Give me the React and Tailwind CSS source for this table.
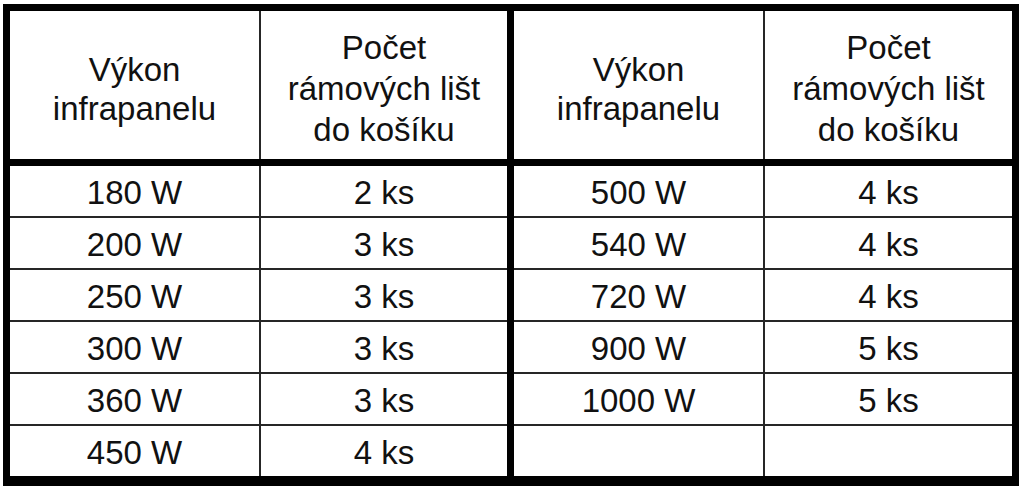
const left = [
  ['180 W', '2 ks'],
  ['200 W', '3 ks'],
  ['250 W', '3 ks'],
  ['300 W', '3 ks'],
  ['360 W', '3 ks'],
  ['450 W', '4 ks'],
];

const right = [
  ['500 W', '4 ks'],
  ['540 W', '4 ks'],
  ['720 W', '4 ks'],
  ['900 W', '5 ks'],
  ['1000 W', '5 ks'],
  ['', ''],
];

const Half = ({ rows, className = '', firstWidth, secondWidth }) => (
  <div className={`flex flex-col ${className}`}>
    <div className="flex h-[155px] border-b-[7px] border-black">
      <div className={`${firstWidth} flex items-center justify-center border-r-2 border-[#262626] pt-[8px] text-center leading-[39px]`}>
        <span>
          Výkon
          <br />
          infrapanelu
        </span>
      </div>
      <div className={`${secondWidth} flex items-center justify-center pt-[7px] text-center leading-[41px]`}>
        <span>
          Počet
          <br />
          rámových lišt
          <br />
          do košíku
        </span>
      </div>
    </div>
    {rows.map(([power, count], i) => (
      <div
        key={i}
        className={`flex ${i === 0 ? 'h-[50px]' : 'h-[52px] border-t-2 border-[#262626]'}`}
      >
        <div className={`${firstWidth} flex items-center justify-center border-r-2 border-[#262626] pt-[3px]`}>
          {power}
        </div>
        <div className={`${secondWidth} flex items-center justify-center pt-[3px]`}>{count}</div>
      </div>
    ))}
  </div>
);

export default function App() {
  return (
    <div className="h-[486px] w-[1028px] overflow-hidden bg-white pl-[3px] pt-[4px] font-['Liberation_Sans',Arial,sans-serif] text-[33px] text-[#111]">
      <div className="flex w-[1016px] border-[7px] border-b-[10px] border-black">
        <Half
          rows={left}
          className="border-r-[7px] border-black"
          firstWidth="w-[251px]"
          secondWidth="w-[246px]"
        />
        <Half rows={right} firstWidth="w-[251px]" secondWidth="w-[247px]" />
      </div>
    </div>
  );
}
